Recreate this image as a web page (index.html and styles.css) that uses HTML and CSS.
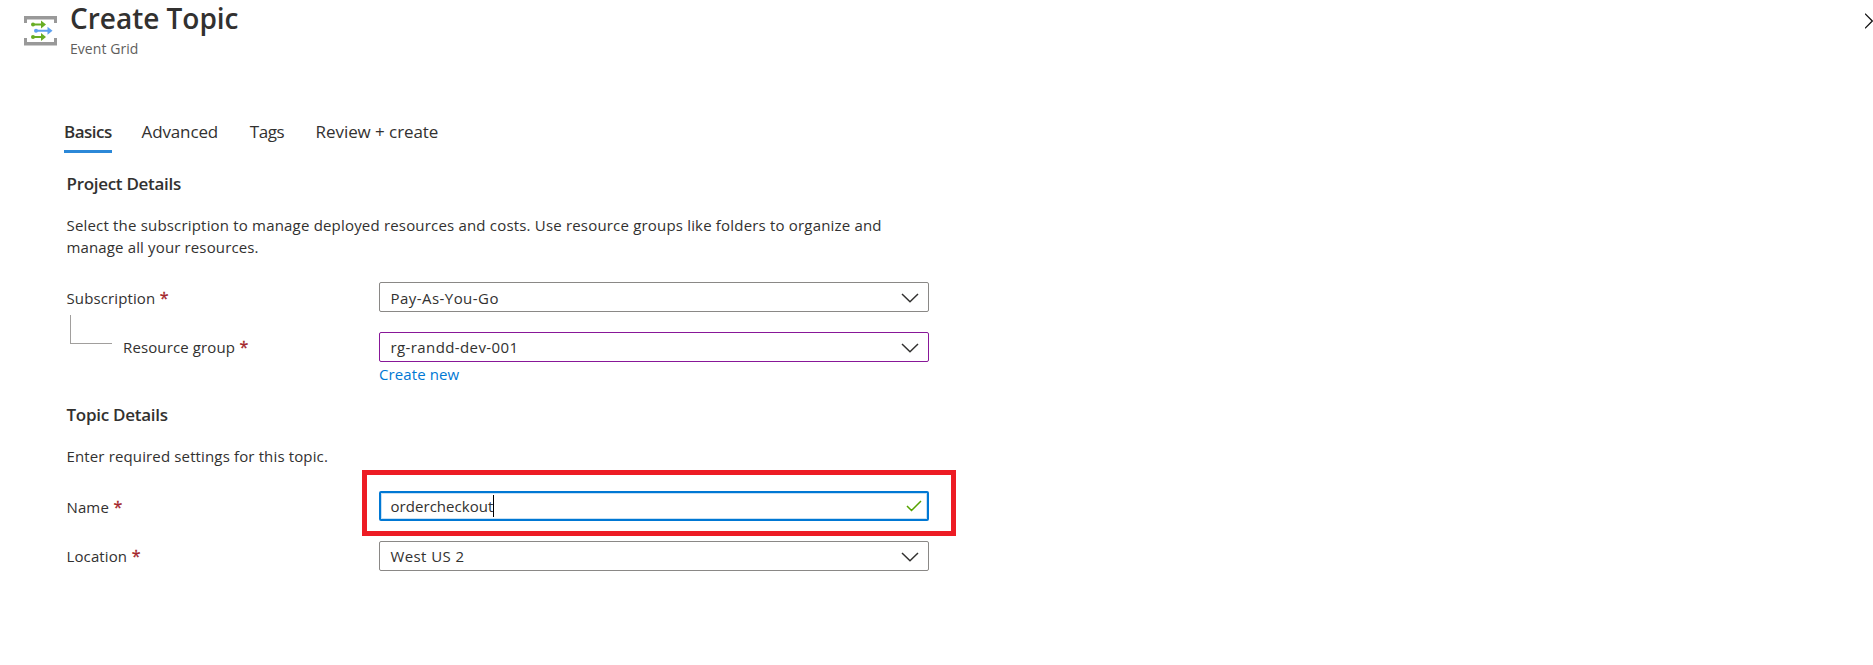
FILE: index.html
```html
<!DOCTYPE html>
<html lang="en">
<head>
<meta charset="utf-8">
<title>Create Topic</title>
<link rel="stylesheet" href="styles.css">
</head>
<body>
<header class="header">
  <svg class="logo" width="34" height="31" viewBox="0 0 34 31">
    <path d="M0 0H33V7H30V3.500H3V7H0ZM0 29.500H33V22H30V26H3V22H0Z" fill="#999"/>
    <g fill="#68ad24"><circle cx="9" cy="8.500" r="2"/><path d="M9 7.500H17V4.500L22 8.500L17 12.500V9.500H9Z"/><circle cx="9" cy="21" r="2"/><path d="M9 20H17V17L22 21L17 25V22H9Z"/></g>
    <g fill="#5ea0ef"><circle cx="12" cy="14.700" r="2"/><path d="M12 13.700H23.500V10.700L28.500 14.700L23.500 18.700V15.700H12Z"/></g>
  </svg>
  <div class="titles">
    <h1 class="title">Create Topic</h1>
    <p class="subtitle">Event Grid</p>
  </div>
  <svg class="close" width="8" height="16" viewBox="0 0 8 16"><path d="M0 .7L7.300 8L0 15.300" fill="none" stroke="#111" stroke-width="1.300"/></svg>
</header>
<nav class="tabs">
  <a class="tab tab-active">Basics</a>
  <a class="tab tab-advanced">Advanced</a>
  <a class="tab tab-tags">Tags</a>
  <a class="tab tab-review">Review + create</a>
</nav>
<main class="form">
  <h2 class="section-title section-project">Project Details</h2>
  <p class="intro"><span class="intro-first">Select the subscription to manage deployed resources and costs. Use resource groups like folders to organize and</span><br>manage all your resources.</p>
  <div class="row">
    <div class="label"><span>Subscription</span><span class="star">*</span></div>
    <div class="field"><span class="value value-plan">Pay-As-You-Go</span><svg class="chevron" width="18" height="10" viewBox="0 0 18 10"><path d="M1 1L9 8.700L17 1"/></svg></div>
  </div>
  <div class="row row-group">
    <div class="label label-nested"><i class="branch"></i><span>Resource group</span><span class="star">*</span></div>
    <div class="field field-changed"><span class="value">rg-randd-dev-001</span><svg class="chevron" width="18" height="10" viewBox="0 0 18 10"><path d="M1 1L9 8.700L17 1"/></svg></div>
  </div>
  <a class="create-link">Create new</a>
  <h2 class="section-title section-topic">Topic Details</h2>
  <p class="intro">Enter required settings for this topic.</p>
  <div class="row">
    <div class="label"><span>Name</span><span class="star">*</span></div>
    <div class="field field-focus"><span class="value-name">ordercheckout</span><i class="caret"></i><svg class="check" width="16" height="12" viewBox="0 0 16 12"><path d="M1 6L5.500 10.500L15 1"/></svg><div class="highlight"></div></div>
  </div>
  <div class="row row-location">
    <div class="label label-location"><span>Location</span><span class="star">*</span></div>
    <div class="field"><span class="value">West US 2</span><svg class="chevron" width="18" height="10" viewBox="0 0 18 10"><path d="M1 1L9 8.700L17 1"/></svg></div>
  </div>
</main>
</body>
</html>
```
FILE: styles.css
```css
* { box-sizing: border-box; }
body { margin: 0; height: 665px; overflow: hidden; background: #fff; color: #323130; font: 15px/22px "Open Sans", "Noto Sans", sans-serif; }
h1, h2, p { margin: 0; }
.header { display: flex; align-items: flex-start; height: 118px; padding-left: 24px; }
.logo { margin-top: 16px; }
.titles { margin-left: 12px; }
.title { font-size: 28px; line-height: 36px; font-weight: 600; letter-spacing: -0.02px; }
.subtitle { font-size: 14px; line-height: 22px; margin-top: 2px; color: #605e5c; letter-spacing: 0.05px; }
.close { margin: 13px 0 0 auto; }
.tabs { display: flex; padding-left: 64px; height: 35px; font-size: 17px; line-height: 28px; }
.tab { height: 35px; }
.tab-active { width: 48px; border-bottom: 3px solid #2b88d8; font-weight: 600; letter-spacing: -0.5px; }
.tab-advanced { margin-left: 29.5px; letter-spacing: -0.12px; }
.tab-tags { margin-left: 31.7px; letter-spacing: -0.5px; }
.tab-review { margin-left: 31.6px; letter-spacing: -0.07px; }
.form { padding-left: 66.5px; width: 929px; }
.section-title { font-size: 17px; line-height: 22px; font-weight: 600; padding-top: 20px; }
.section-project { letter-spacing: -0.3px; }
.section-topic { letter-spacing: -0.27px; padding-top: 19px; }
.intro { white-space: nowrap; padding-top: 19px; letter-spacing: 0.14px; }
.intro-first { letter-spacing: 0.185px; }
.row { display: flex; justify-content: space-between; height: 30px; margin-top: 24px; }
.label { display: flex; line-height: 32px; letter-spacing: 0.12px; }
.label-nested, .label-location { line-height: 30px; }
.star { color: #a4262c; font-size: 16px; margin-left: 4.5px; -webkit-text-stroke: 0.3px #a4262c; }
.row-group, .row-location { margin-top: 20px; }
.branch { width: 42px; height: 29px; margin: -17px 11px 0 3.5px; border: solid #a19f9d; border-width: 0 0 1px 1px; }
.field { display: flex; align-items: center; width: 550px; height: 30px; padding: 0 9px 0 10.5px; border: 1px solid #8a8886; border-radius: 2px; position: relative; }
.field-changed { border-color: #881798; }
.value { letter-spacing: 0.4px; }
.value-plan { letter-spacing: 0.45px; padding-top: 2px; }
.value-name { letter-spacing: 0.05px; }
.chevron { margin: 1px 0 0 auto; fill: none; stroke: #323130; stroke-width: 1.500; }
.create-link { display: block; margin: 1px 0 0 312.5px; color: #0078d4; letter-spacing: 0.1px; }
.field-focus { border: 2px solid #0078d4; padding: 0 5px 0 9.5px; box-shadow: inset 0 0 0 1px #c7e0f4; }
.caret { width: 1px; height: 22px; background: #000; }
.check { margin-left: auto; fill: none; stroke: #57a300; stroke-width: 1.500; }
.highlight { position: absolute; left: -19px; top: -23px; width: 594px; height: 66px; border: 5px solid #ed1c24; }
```
